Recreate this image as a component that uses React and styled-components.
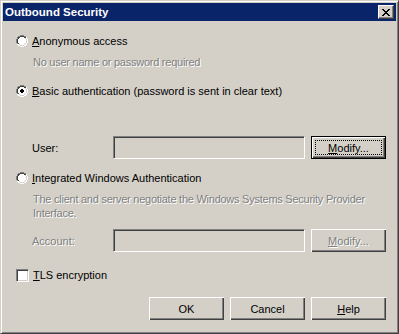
import styled, { createGlobalStyle } from "styled-components"

const GlobalStyle = createGlobalStyle`
html, body {
    margin: 0;
    padding: 0;
    background: #d4d0c8;
}
* {
    box-sizing: border-box;
}
`

const Window = styled.div`
width: 399px;
height: 334px;
background: #d4d0c8;
border-top: 1px solid #d4d0c8;
border-left: 1px solid #d4d0c8;
border-right: 1px solid #404040;
border-bottom: 1px solid #404040;
box-shadow: inset 1px 1px 0 #ffffff, inset -1px -1px 0 #808080;
padding: 2px;
display: flex;
flex-direction: column;
font-family: "Liberation Sans", Arial, sans-serif;
font-size: 11px;
color: #000;
`

const TitleBar = styled.div`
height: 18px;
background: #0a246a;
display: flex;
align-items: center;
justify-content: space-between;
padding: 0 2px 0 2px;
color: #fff;
font-weight: bold;
font-size: 11.5px;
`

const CloseButton = styled.button`
width: 16px;
height: 14px;
padding: 0;
background: #d4d0c8;
border-top: 1px solid #fff;
border-left: 1px solid #fff;
border-right: 1px solid #404040;
border-bottom: 1px solid #404040;
box-shadow: inset -1px -1px 0 #808080;
display: flex;
align-items: center;
justify-content: center;
`

const Body = styled.div`
padding: 13px 10px 0 13px;
display: flex;
flex-direction: column;
`

const OptionRow = styled.div`
height: 14px;
display: flex;
align-items: center;
margin-top: ${(p) => p.$mt || 0}px;
`

const OptionLabel = styled.span`
margin-left: 4px;
white-space: nowrap;
`

const Hint = styled.div`
padding-left: 17px;
margin-top: ${(p) => p.$mt || 0}px;
line-height: 14px;
letter-spacing: -0.25px;
color: #808080;
text-shadow: 1px 1px 0 #ffffff;
`

const FieldRow = styled.div`
height: 23px;
display: flex;
align-items: center;
margin-top: ${(p) => p.$mt || 0}px;
`

const FieldLabel = styled.span`
width: 97px;
padding-left: 16px;
color: ${(p) => (p.$disabled ? "#808080" : "#000")};
text-shadow: ${(p) => (p.$disabled ? "1px 1px 0 #ffffff" : "none")};
`

const Input = styled.div`
flex: 1;
height: 23px;
background: #d4d0c8;
border-top: 1px solid #808080;
border-left: 1px solid #808080;
border-right: 1px solid #ffffff;
border-bottom: 1px solid #ffffff;
box-shadow: inset 1px 1px 0 #404040, inset -1px -1px 0 #d4d0c8;
`

const Button = styled.button`
width: 75px;
height: 23px;
margin-left: ${(p) => p.$ml || 0}px;
padding: 0;
font-family: "Liberation Sans", Arial, sans-serif;
font-size: 11px;
background: #d4d0c8;
color: ${(p) => (p.$disabled ? "#808080" : "#000")};
text-shadow: ${(p) => (p.$disabled ? "1px 1px 0 #ffffff" : "none")};
border: ${(p) => (p.$default ? "1px solid #000" : "none")};
box-shadow: inset 1px 1px 0 #fff, inset -1px -1px 0 #404040, inset -2px -2px 0 #808080;
display: flex;
align-items: center;
justify-content: center;
`

const Focus = styled.span`
display: flex;
align-items: center;
justify-content: center;
width: 65px;
height: 13px;
outline: 1px dotted #000;
`

const Key = styled.span`
text-decoration: underline;
text-underline-offset: 1px;
`

const Checkbox = styled.span`
width: 13px;
height: 13px;
background: #fff;
border-top: 1px solid #808080;
border-left: 1px solid #808080;
border-right: 1px solid #fff;
border-bottom: 1px solid #fff;
box-shadow: inset 1px 1px 0 #404040, inset -1px -1px 0 #d4d0c8;
`

const ButtonBar = styled.div`
display: flex;
justify-content: flex-end;
margin-top: 15px;
`

function Radio({ checked }) {
    return (
        <svg width="12" height="12" viewBox="0 0 12 12" style={{ flexShrink: 0 }}>
            <path d="M4 0h4v1h2v1h1v2h1v4h-1v2h-1v1h-2v1h-4v-1h-2v-1h-1v-2h-1v-4h1v-2h1v-1h2z" fill="#ffffff" />
            <path d="M4 0h4v1h-4zM2 1h2v1h-2zM8 1h2v1h-2zM1 2h1v2h-1zM0 4h1v4h-1zM1 8h1v1h-1z" fill="#808080" />
            <path d="M4 1h4v1h-4zM2 2h2v1h-2zM8 2h2v1h-2zM2 3h1v1h-1zM1 4h1v4h-1zM2 8h1v1h-1z" fill="#404040" />
            <path d="M10 2h1v2h-1zM11 4h1v4h-1zM10 8h1v2h-1zM8 10h2v1h-2zM4 11h4v1h-4zM2 10h2v1h-2z" fill="#ffffff" />
            <path d="M9 3h1v1h-1zM10 4h1v4h-1zM9 8h1v1h-1zM8 9h1v1h-1zM4 10h4v1h-4zM3 9h1v1h-1z" fill="#d4d0c8" />
            {checked && <path d="M5 4h2v1h1v2h-1v1h-2v-1h-1v-2h1z" fill="#000" />}
        </svg>
    )
}

export default function App() {
    return (
        <>
            <GlobalStyle />
            <Window>
                <TitleBar>
                    <span>Outbound Security</span>
                    <CloseButton>
                        <svg width="8" height="7" viewBox="0 0 8 7">
                            <path d="M0 0h2v1h1v1h2v-1h1v-1h2v1h-1v1h-1v1h-1v1h1v1h1v1h1v1h-2v-1h-1v-1h-2v1h-1v1h-2v-1h1v-1h1v-1h1v-1h-1v-1h-1v-1h-1z" fill="#000" />
                        </svg>
                    </CloseButton>
                </TitleBar>
                <Body>
                    <OptionRow>
                        <Radio />
                        <OptionLabel><Key>A</Key>nonymous access</OptionLabel>
                    </OptionRow>
                    <Hint $mt={7}>No user name or password required</Hint>
                    <OptionRow $mt={15}>
                        <Radio checked />
                        <OptionLabel><Key>B</Key>asic authentication (password is sent in clear text)</OptionLabel>
                    </OptionRow>
                    <FieldRow $mt={38}>
                        <FieldLabel>User:</FieldLabel>
                        <Input />
                        <Button $ml={6} $default>
                            <Focus><Key>M</Key>odify...</Focus>
                        </Button>
                    </FieldRow>
                    <OptionRow $mt={12}>
                        <Radio />
                        <OptionLabel><Key>I</Key>ntegrated Windows Authentication</OptionLabel>
                    </OptionRow>
                    <Hint $mt={7}>
                        The client and server negotiate the Windows Systems Security Provider<br />
                        Interface.
                    </Hint>
                    <FieldRow $mt={9}>
                        <FieldLabel $disabled>Account:</FieldLabel>
                        <Input />
                        <Button $ml={6} $disabled><Key>M</Key>odify...</Button>
                    </FieldRow>
                    <OptionRow $mt={16}>
                        <Checkbox />
                        <OptionLabel><Key>T</Key>LS encryption</OptionLabel>
                    </OptionRow>
                    <ButtonBar>
                        <Button>OK</Button>
                        <Button $ml={6}>Cancel</Button>
                        <Button $ml={6}><Key>H</Key>elp</Button>
                    </ButtonBar>
                </Body>
            </Window>
        </>
    )
}
